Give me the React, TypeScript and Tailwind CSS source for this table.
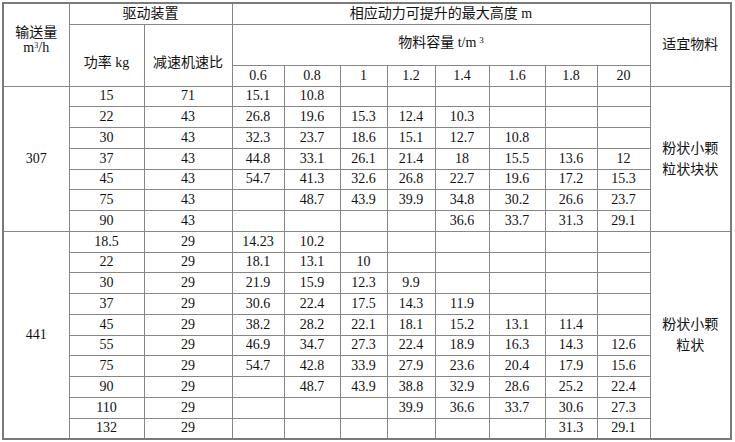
import React from "react";

const widths = [66, 75, 88, 52, 56, 47, 48, 54, 56, 52, 53, 81];
const dens = ["0.6", "0.8", "1", "1.2", "1.4", "1.6", "1.8", "20"];

const g1: string[][] = [
  ["15", "71", "15.1", "10.8", "", "", "", "", "", ""],
  ["22", "43", "26.8", "19.6", "15.3", "12.4", "10.3", "", "", ""],
  ["30", "43", "32.3", "23.7", "18.6", "15.1", "12.7", "10.8", "", ""],
  ["37", "43", "44.8", "33.1", "26.1", "21.4", "18", "15.5", "13.6", "12"],
  ["45", "43", "54.7", "41.3", "32.6", "26.8", "22.7", "19.6", "17.2", "15.3"],
  ["75", "43", "", "48.7", "43.9", "39.9", "34.8", "30.2", "26.6", "23.7"],
  ["90", "43", "", "", "", "", "36.6", "33.7", "31.3", "29.1"],
];

const g2: string[][] = [
  ["18.5", "29", "14.23", "10.2", "", "", "", "", "", ""],
  ["22", "29", "18.1", "13.1", "10", "", "", "", "", ""],
  ["30", "29", "21.9", "15.9", "12.3", "9.9", "", "", "", ""],
  ["37", "29", "30.6", "22.4", "17.5", "14.3", "11.9", "", "", ""],
  ["45", "29", "38.2", "28.2", "22.1", "18.1", "15.2", "13.1", "11.4", ""],
  ["55", "29", "46.9", "34.7", "27.3", "22.4", "18.9", "16.3", "14.3", "12.6"],
  ["75", "29", "54.7", "42.8", "33.9", "27.9", "23.6", "20.4", "17.9", "15.6"],
  ["90", "29", "", "48.7", "43.9", "38.8", "32.9", "28.6", "25.2", "22.4"],
  ["110", "29", "", "", "", "39.9", "36.6", "33.7", "30.6", "27.3"],
  ["132", "29", "", "", "", "", "", "", "31.3", "29.1"],
];

const cell = "border border-[#868686] p-0 text-center align-middle font-normal";

function Group({
  rows,
  label,
  material,
}: {
  rows: string[][];
  label: string;
  material: React.ReactNode;
}) {
  return (
    <>
      {rows.map((r, i) => (
        <tr key={i} className="h-[20.76px]">
          {i === 0 && (
            <td rowSpan={rows.length} className={cell}>
              {label}
            </td>
          )}
          {r.map((v, j) => (
            <td key={j} className={cell}>
              {v}
            </td>
          ))}
          {i === 0 && (
            <td rowSpan={rows.length} className={cell + " leading-[21px]"}>
              {material}
            </td>
          )}
        </tr>
      ))}
    </>
  );
}

export default function App() {
  return (
    <div className="w-[735px] h-[442px] bg-white pl-[2px] pt-[2px]">
      <table
        className="table-fixed border-collapse w-[728px] text-[14px] leading-[16px] text-[#111] border-2 border-[#7a7a7a]"
        style={{ fontFamily: '"Liberation Serif", "Noto Sans CJK SC", serif' }}
      >
        <colgroup>
          {widths.map((w, i) => (
            <col key={i} style={{ width: w }} />
          ))}
        </colgroup>
        <thead>
          <tr className="h-[21px]">
            <th rowSpan={3} className={cell + " pb-[10px] leading-[15px]"}>
              输送量
              <br />
              m<sup className="text-[8px]">3</sup>/h
            </th>
            <th colSpan={2} className={cell}>
              驱动装置
            </th>
            <th colSpan={8} className={cell}>
              相应动力可提升的最大高度 m
            </th>
            <th rowSpan={3} className={cell}>
              适宜物料
            </th>
          </tr>
          <tr className="h-[41px]">
            <th rowSpan={2} className={cell + " pt-[16px]"}>
              功率 kg
            </th>
            <th rowSpan={2} className={cell + " pt-[16px]"}>
              减速机速比
            </th>
            <th colSpan={8} className={cell + " align-bottom pb-[3px]"}>
              物料容量 t/m<sup className="text-[9px] ml-[3px]">3</sup>
            </th>
          </tr>
          <tr className="h-[21px]">
            {dens.map((d) => (
              <th key={d} className={cell}>
                {d}
              </th>
            ))}
          </tr>
        </thead>
        <tbody>
          <Group
            rows={g1}
            label="307"
            material={
              <>
                粉状小颗
                <br />
                粒状块状
              </>
            }
          />
          <Group
            rows={g2}
            label="441"
            material={
              <>
                粉状小颗
                <br />
                粒状
              </>
            }
          />
        </tbody>
      </table>
    </div>
  );
}
